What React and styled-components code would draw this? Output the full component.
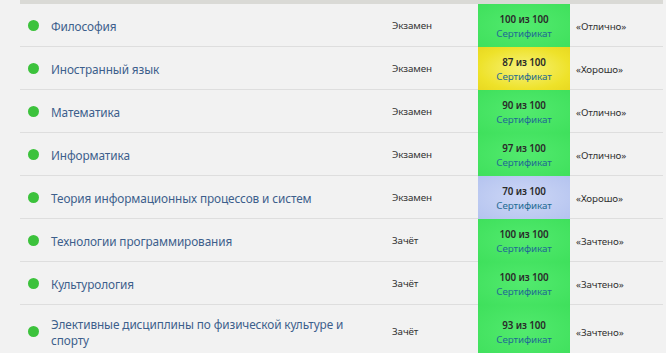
import React from 'react';
import styled, { createGlobalStyle } from 'styled-components';

const GlobalStyle = createGlobalStyle`
  body {
    margin: 0;
    background: #f2f2f2;
    font-family: 'Noto Sans', 'Open Sans', sans-serif;
  }
`;

const StyledTable = styled.div`
  width: 643px;
  margin-left: 20px;
  border-top: 4px solid #dadad6;
`;

const Row = styled.div`
  display: grid;
  grid-template-columns: 31px 341px 86px 92px 93px;
  min-height: ${(p) => (p.tall ? 52 : 42)}px;
  border-bottom: 1px solid #dedede;
  align-items: center;
`;

const Dot = styled.span`
  width: 11px;
  height: 11px;
  margin-left: 8px;
  border-radius: 50%;
  background: #3cc23c;
`;

const Name = styled.div`
  color: #3d5f8c;
  font-size: 11.8px;
  letter-spacing: -0.1px;
  line-height: 16px;
  padding: 2px 40px 0 0;
`;

const Type = styled.div`
  color: #333;
  font-size: 9.8px;
  letter-spacing: -0.1px;
  padding-top: 1px;
`;

const colors = {
  green: 'radial-gradient(ellipse at center, #52ea6e 0%, #3fe05c 100%)',
  yellow: 'radial-gradient(ellipse at center, #f7f27a 0%, #eee22a 70%, #e8d820 100%)',
  blue: 'radial-gradient(ellipse at center, #cdd7f6 0%, #b4c3ef 100%)',
};

const Score = styled.div`
  align-self: stretch;
  margin-bottom: -1px;
  background: ${(p) => colors[p.tone]};
  display: flex;
  flex-direction: column;
  align-items: center;
  justify-content: center;
  padding-top: 2px;
  font-size: 9.8px;
  letter-spacing: -0.1px;
  line-height: 14px;

  b {
    color: #2a2a2a;
    font-weight: 600;
  }

  span {
    color: #1f6b93;
  }
`;

const Grade = styled.div`
  color: #333;
  font-size: 9.8px;
  letter-spacing: -0.1px;
  padding: 2px 0 0 6px;
`;

const subjects = [
  ['Философия', 'Экзамен', 100, 'green', '«Отлично»'],
  ['Иностранный язык', 'Экзамен', 87, 'yellow', '«Хорошо»'],
  ['Математика', 'Экзамен', 90, 'green', '«Отлично»'],
  ['Информатика', 'Экзамен', 97, 'green', '«Отлично»'],
  ['Теория информационных процессов и систем', 'Экзамен', 70, 'blue', '«Хорошо»'],
  ['Технологии программирования', 'Зачёт', 100, 'green', '«Зачтено»'],
  ['Культурология', 'Зачёт', 100, 'green', '«Зачтено»'],
  ['Элективные дисциплины по физической культуре и спорту', 'Зачёт', 93, 'green', '«Зачтено»'],
];

const App = () => (
  <>
    <GlobalStyle />
    <StyledTable>
      {subjects.map(([name, type, score, tone, grade], i) => (
        <Row key={name} tall={i === subjects.length - 1}>
          <Dot />
          <Name>{name}</Name>
          <Type>{type}</Type>
          <Score tone={tone}>
            <b>{score} из 100</b>
            <span>Сертификат</span>
          </Score>
          <Grade>{grade}</Grade>
        </Row>
      ))}
    </StyledTable>
  </>
);

export default App;
